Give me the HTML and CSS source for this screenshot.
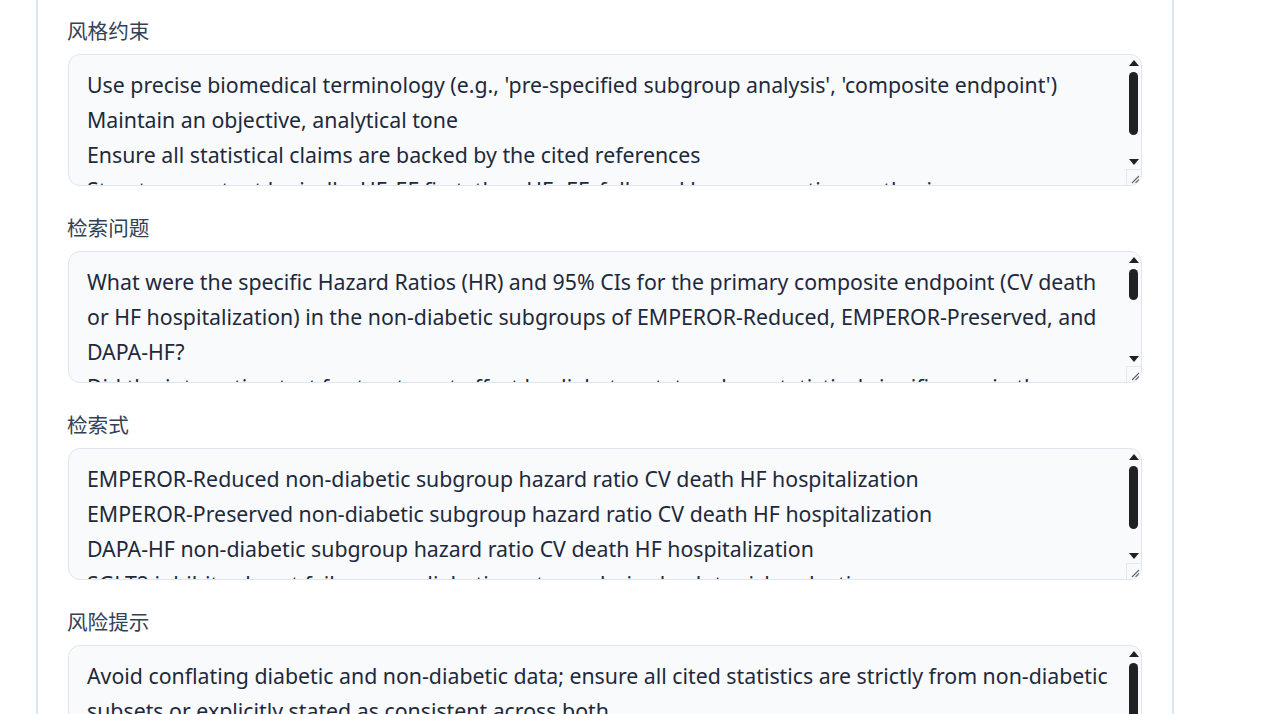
FILE: index.html
```html
<!DOCTYPE html>
<html lang="zh-CN">
<head>
<meta charset="utf-8">
<title>检索方案</title>
<link rel="stylesheet" href="styles.css">
</head>
<body>
<main class="page">
  <section class="card">
    <div class="field">
      <label class="field-label" for="style">风格约束</label>
      <div class="input-wrap">
        <textarea id="style" class="field-input" readonly>Use precise biomedical terminology (e.g., 'pre-specified subgroup analysis', 'composite endpoint')
Maintain an objective, analytical tone
Ensure all statistical claims are backed by the cited references
Structure content logically: HFrEF first, then HFpEF, followed by comparative synthesis</textarea>
        <div class="scrollbar" aria-hidden="true">
          <span class="sb-btn sb-up"></span>
          <div class="sb-track"><span class="sb-thumb" style="top:2px;height:63px"></span></div>
          <span class="sb-btn sb-down"></span>
          <span class="sb-grip"><svg viewBox="0 0 15 16" width="15" height="16"><path d="M6 14 L13 7 M9.5 14 L13 10.5" stroke="#5f6368" stroke-width="1.1" fill="none"/></svg></span>
        </div>
      </div>
    </div>
    <div class="field">
      <label class="field-label" for="questions">检索问题</label>
      <div class="input-wrap">
        <textarea id="questions" class="field-input" readonly>What were the specific Hazard Ratios (HR) and 95% CIs for the primary composite endpoint (CV death or HF hospitalization) in the non-diabetic subgroups of EMPEROR-Reduced, EMPEROR-Preserved, and DAPA-HF?
Did the interaction test for treatment effect by diabetes status show statistical significance in these trials, and what were the reported p-values for interaction?
How do the absolute risk reductions in non-diabetic patients compare with those observed in diabetic patients across the SGLT2 inhibitor heart failure trials?</textarea>
        <div class="scrollbar" aria-hidden="true">
          <span class="sb-btn sb-up"></span>
          <div class="sb-track"><span class="sb-thumb" style="top:2px;height:31px"></span></div>
          <span class="sb-btn sb-down"></span>
          <span class="sb-grip"><svg viewBox="0 0 15 16" width="15" height="16"><path d="M6 14 L13 7 M9.5 14 L13 10.5" stroke="#5f6368" stroke-width="1.1" fill="none"/></svg></span>
        </div>
      </div>
    </div>
    <div class="field">
      <label class="field-label" for="query">检索式</label>
      <div class="input-wrap">
        <textarea id="query" class="field-input" readonly>EMPEROR-Reduced non-diabetic subgroup hazard ratio CV death HF hospitalization
EMPEROR-Preserved non-diabetic subgroup hazard ratio CV death HF hospitalization
DAPA-HF non-diabetic subgroup hazard ratio CV death HF hospitalization
SGLT2 inhibitor heart failure non-diabetic meta-analysis absolute risk reduction</textarea>
        <div class="scrollbar" aria-hidden="true">
          <span class="sb-btn sb-up"></span>
          <div class="sb-track"><span class="sb-thumb" style="top:2px;height:63px"></span></div>
          <span class="sb-btn sb-down"></span>
          <span class="sb-grip"><svg viewBox="0 0 15 16" width="15" height="16"><path d="M6 14 L13 7 M9.5 14 L13 10.5" stroke="#5f6368" stroke-width="1.1" fill="none"/></svg></span>
        </div>
      </div>
    </div>
    <div class="field">
      <label class="field-label" for="risk">风险提示</label>
      <div class="input-wrap">
        <textarea id="risk" class="field-input" readonly>Avoid conflating diabetic and non-diabetic data; ensure all cited statistics are strictly from non-diabetic subsets or explicitly stated as consistent across both
Subgroup analyses may be underpowered; interpret confidence intervals with caution</textarea>
        <div class="scrollbar" aria-hidden="true">
          <span class="sb-btn sb-up"></span>
          <div class="sb-track"><span class="sb-thumb" style="top:2px;height:70px"></span></div>
          <span class="sb-btn sb-down"></span>
          <span class="sb-grip"><svg viewBox="0 0 15 16" width="15" height="16"><path d="M6 14 L13 7 M9.5 14 L13 10.5" stroke="#5f6368" stroke-width="1.1" fill="none"/></svg></span>
        </div>
      </div>
    </div>
  </section>
</main>
</body>
</html>
```

FILE: styles.css
```css
* {
  box-sizing: border-box;
}

html, body {
  margin: 0;
  background: #ffffff;
}

body {
  font-family: "Noto Sans", "Noto Sans CJK SC", sans-serif;
  color: #1e293b;
  overflow: hidden;
}

.page {
  padding-left: 36px;
}

.card {
  width: 1138px;
  background: #ffffff;
  border-left: 2px solid #dbe4f0;
  border-right: 2px solid #dbe4f0;
  padding: 16px 30px 0;
  display: flex;
  flex-direction: column;
  gap: 27px;
}

.field {
  display: flex;
  flex-direction: column;
  gap: 10px;
}

.field-label {
  font-family: "Noto Sans CJK SC", "Noto Sans", sans-serif;
  font-size: 20.6px;
  line-height: 28px;
  color: #334155;
  margin-left: -1px;
}

.input-wrap {
  position: relative;
}

.field-input {
  display: block;
  width: 100%;
  height: 132px;
  margin: 0;
  padding: 11.5px 33px 12px 18px;
  border: 1px solid #dfe6ef;
  border-radius: 12px;
  background: #f8fafc;
  color: #1e293b;
  font-family: "Noto Sans", "Noto Sans CJK SC", sans-serif;
  font-size: 21.3px;
  line-height: 35px;
  resize: none;
  outline: none;
  overflow: hidden;
}

/* classic vertical scrollbar drawn over the right edge of each text box */
.scrollbar {
  position: absolute;
  top: 1px;
  right: 1px;
  bottom: 1px;
  width: 15px;
  display: flex;
  flex-direction: column;
  border-radius: 0 11px 11px 0;
  overflow: hidden;
}

.sb-btn {
  flex: 0 0 15px;
  position: relative;
}

.sb-btn::after {
  content: "";
  position: absolute;
  left: 3px;
  width: 0;
  height: 0;
  border-left: 5px solid transparent;
  border-right: 5px solid transparent;
}

.sb-up::after {
  top: 5px;
  border-bottom: 6px solid #202124;
}

.sb-down::after {
  top: 6px;
  border-top: 6px solid #202124;
}

.sb-track {
  flex: 1 1 auto;
  position: relative;
}

.sb-thumb {
  position: absolute;
  left: 3px;
  width: 9px;
  border-radius: 5px;
  background: #202124;
}

.sb-grip {
  flex: 0 0 16px;
  display: block;
  background: #f8fafc;
  border-top: 1px solid #e2e8f0;
  border-left: 1px solid #e2e8f0;
  margin-top: 1px;
}

.sb-grip svg {
  display: block;
  margin: -1px 0 0 -1px;
}
```
